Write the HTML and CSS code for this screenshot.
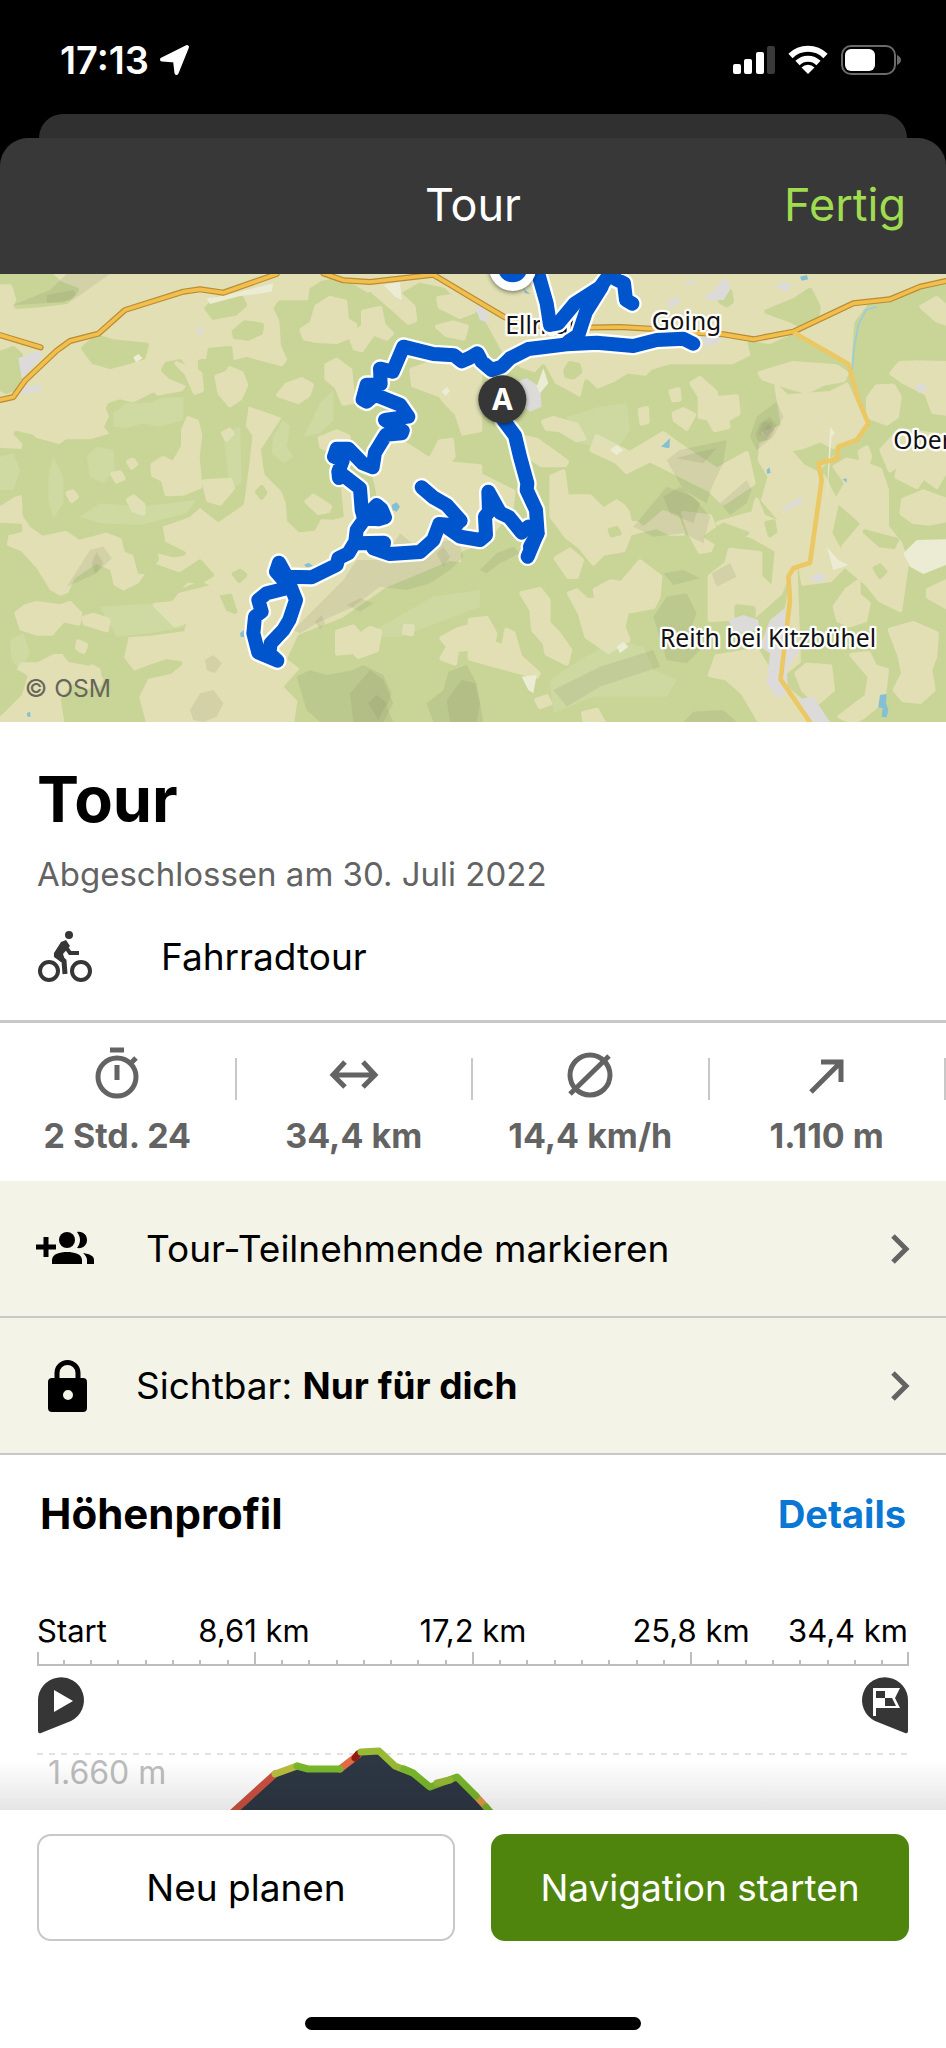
FILE: index.html
```html
<!DOCTYPE html>
<html lang="de">
<head>
    <meta charset="UTF-8">
    <meta name="viewport" content="width=device-width, initial-scale=1.0">
    <title>Tour</title>
    <link rel="stylesheet" href="styles.css">
</head>
<body>
    <div class="status-bar">
        <div class="status-left">
            <span>17:13</span>
            <svg width="32" height="32" viewBox="0 0 32 32"><path d="M28 3L3 15.500 16 16.500 17.500 29Z" fill="#fff" stroke="#fff" stroke-width="4" stroke-linejoin="round"/></svg>
        </div>
        <div class="status-right">
            <svg width="42" height="30" viewBox="0 0 42 30">
                <rect x="0" y="19" width="8" height="10" rx="2" fill="#fff"/>
                <rect x="11" y="14" width="8" height="15" rx="2" fill="#fff"/>
                <rect x="23" y="7" width="8" height="22" rx="2" fill="#fff"/>
                <rect x="34" y="1" width="8" height="28" rx="2" fill="#3a3a3a"/>
            </svg>
            <svg width="40" height="30" viewBox="0 0 40 30">
                <g fill="none" stroke="#fff" stroke-width="6">
                    <path d="M2.500 11A25 25 0 0 1 37.500 11"/>
                    <path d="M9.500 18A15 15 0 0 1 30.500 18"/>
                </g>
                <path d="M20 29L13.500 22.500A9 9 0 0 1 26.500 22.500Z" fill="#fff"/>
            </svg>
            <svg width="60" height="30" viewBox="0 0 60 30">
                <rect x="1" y="1" width="53" height="28" rx="9" fill="none" stroke="#6a6a6a" stroke-width="2"/>
                <rect x="4" y="4" width="30" height="22" rx="6" fill="#fff"/>
                <path d="M56 10Q60 12 60 15T56 20Z" fill="#6a6a6a"/>
            </svg>
        </div>
    </div>

    <div class="back-sheet"></div>
    <header class="nav-bar">
        <h2>Tour</h2>
        <button class="done">Fertig</button>
    </header>

    <main>
        <svg class="map" viewBox="0 12 2838 1344" role="img" aria-label="Karte der Tour">
            <rect y="12" width="2838" height="1344" fill="#e1dfb3"/>

            <!-- forest -->
            <g class="forest">
                <path d="M0 12H150L180 40 230 60 200 95 120 105 50 110 30 80 0 60Z"/>
                <path d="M250 235L290 200 340 215 440 225 430 262 385 275 330 290 280 275Z"/>
                <path d="M620 115L650 85 720 78 735 105 705 130 640 142Z"/>
                <path d="M702 185L735 158 785 165 782 188 745 205 705 200Z"/>
                <path d="M0 250L40 235 62 255 60 350 20 365 0 355Z"/>
                <path d="M330 405L360 395 400 405 460 375 470 385 550 370 570 345 535 330 510 320 490 300 500 282 540 275 560 300 585 355 605 360 600 275 625 270 630 240 690 235 695 280 740 268 850 298 870 270 850 225 845 150 828 115 840 98 930 98 935 60 965 40 1010 30 1060 50 1100 75 1150 65 1190 85 1260 45 1330 60 1370 100 1440 140 1500 250 1560 300 1620 320 1660 385 1700 560 1690 660 1600 680 1440 600 1330 570 1220 540 1160 640 1080 720 1000 742 960 740 940 775 900 780 868 750 865 700 850 660 800 610 790 540 855 440 740 400 730 470 750 500 740 590 725 700 655 748 600 705 565 735 480 765 490 820 550 850 520 855 465 840 470 868 440 905 420 905 405 850 380 840 370 800 320 780 240 802 200 775 130 790 95 765 75 735 72 665 40 675 0 700 0 540 70 545 75 520 48 490 95 500 105 510 180 530 200 515 270 515 340 495 320 470 335 440 325 415Z"/>
                <path d="M0 765L60 768 60 780 20 790 12 830 60 850 105 900 145 965 180 985 210 975 230 930 290 890 325 905 335 950 370 970 420 945 445 910 470 890 510 905 540 915 600 875 635 915 600 935 560 930 520 975 600 940 640 960 620 1040 570 1050 560 1075 450 1090 380 1095 365 1165 400 1210 440 1195 500 1175 540 1180 510 1205 440 1220 410 1280 430 1356 200 1356 190 1290 220 1250 250 1265 300 1260 320 1225 270 1180 210 1170 190 1145 160 1145 110 1170 60 1170 40 1200 75 1220 60 1270 0 1330Z"/>
                <path d="M648 985L690 978 705 1025 680 1015 650 1000Z"/>
                <path d="M702 912L720 903 735 915 718 932Z"/>
                <path d="M772 665L785 652 795 668 785 682Z"/>
                <path d="M900 1100L1030 1050 1160 960 1350 880 1500 900 1600 830 1560 700 1700 640 1760 850 1700 1000 1500 1356 890 1356 900 1290 860 1250 910 1195 870 1165Z"/>
                <path d="M1560 600L1640 620 1690 740 1720 1356H1400L1350 1100 1500 960 1540 800Z"/>
            </g>
            <g class="forest" transform="translate(1410 0)">
                <path d="M220 290L250 345 335 392 350 335 380 365 440 340 475 318 530 325 550 305 600 290 790 290 850 260 840 220 900 230 980 195 1130 290 1160 400 1195 460 1160 520 1100 540 1040 590 1050 660 1020 870 960 900 940 1000 900 1160 930 1240 1000 1356H-20V850L60 820 150 700 170 500 100 420Z"/>
                <path d="M975 90L1020 60 1045 110 1040 150 1000 170 960 150 890 125Z"/>
                <path d="M750 70L780 65 785 95 770 105 752 95Z"/>
                <path d="M287 300L300 280 325 285 330 305 310 322 290 318Z"/>
                <path d="M1160 160L1200 105 1330 60 1428 45V1356H1080L1060 1330 940 1230 1000 1180 990 900 1050 700 1060 600 1200 460 1150 300Z"/>
            </g>

            <!-- clearings -->
            <g class="field">
                <path d="M0 50L30 50 42 90 30 108 0 110Z"/>
                <path d="M905 180L935 160 950 110 990 85 1035 95 1040 150 1065 165 1060 195 1010 215 950 212 915 205Z"/>
                <path d="M1090 125L1140 115 1150 165 1175 190 1160 205 1120 190 1085 240 1065 235 1050 195 1090 170Z"/>
                <path d="M1120 65L1180 55 1240 110 1245 150 1225 158 1190 125Z"/>
                <path d="M1312 170L1360 158 1400 170 1390 205 1370 200 1340 195Z"/>
                <path d="M1315 85L1350 80 1420 125 1380 140 1320 110Z"/>
                <path d="M1235 300L1320 270 1440 290 1440 480 1390 490 1370 430 1340 400 1320 375 1240 345Z"/>
                <path d="M1120 600L1180 500 1290 570 1320 515 1355 510 1360 560 1340 580 1440 590 1440 700 1330 690 1290 660 1240 690 1200 740 1140 690Z"/>
                <path d="M650 320L680 310 690 295 725 310 738 345 720 385 690 405 660 370Z"/>
                <path d="M835 375L860 345 905 328 935 345 925 375 895 395Z"/>
                <path d="M980 285L1010 270 1050 300 1055 350 1060 395 1030 400 1010 350 980 325Z"/>
                <path d="M565 445L590 455 600 495 592 560 600 650 550 670 500 672 490 630 460 615 458 585 490 565 520 580 550 530 550 480Z"/>
                <path d="M612 635L690 630 698 655 660 700 625 690Z"/>
                <path d="M530 280L600 310 605 360 585 368 560 310Z"/>
                <path d="M960 505L1010 485 1045 500 1045 530 990 540 965 530Z"/>
                <path d="M1030 650L1080 640 1090 780 1040 760Z"/>
                <path d="M920 695L940 678 990 710 985 722 955 728Z"/>
                <path d="M385 690L400 680 430 705 430 730 400 720Z"/>
                <path d="M203 670L218 665 230 680 215 692Z"/>
                <path d="M385 575L398 570 408 582 395 592ZM338 612L360 608 370 625 350 633ZM670 490L688 480 697 490 680 508Z"/>
                <path d="M50 1030L75 1010 110 1000 180 1010 210 1000 240 1030 235 1060 190 1050 155 1090 110 1090 65 1075Z"/>
                <path d="M250 1045L280 1035 325 1050 320 1080 255 1060Z"/>
                <path d="M465 1005L520 1000 540 975 640 950 700 1090 560 1080 570 1050 525 1065Z"/>
                <path d="M235 1115L258 1125 250 1145 232 1135ZM275 1190L295 1200 300 1240 280 1235Z"/>
                <path d="M1012 1085L1060 1070 1080 1095 1110 1075 1140 1085 1130 1140 1075 1160 1060 1145 1012 1150Z"/>
                <path d="M1215 1068L1238 1070 1235 1092 1213 1088Z"/>
                <path d="M1325 1105L1370 1080 1440 1060 1440 1130 1370 1140 1365 1180 1325 1165 1345 1130Z"/>
            </g>
            <g class="field" transform="translate(1410 0)">
                <path d="M665 340L690 325 735 365 740 385 800 380 805 430 770 450 775 470 735 480 715 445 690 440 690 380Z"/>
                <path d="M510 420L530 415 532 455 515 460ZM602 365L625 358 628 388 610 390ZM612 430L640 418 672 435 650 475 615 450Z"/>
                <path d="M220 455L250 445 320 465 342 505 320 510 270 480 230 475Z"/>
                <path d="M155 500L200 510 290 575 285 585 215 585 170 555Z"/>
                <path d="M365 540L380 500 430 525 480 550 580 490 620 520 740 600 830 550 850 640 760 700 720 660 600 600 540 570 470 605 440 575Z"/>
                <path d="M245 620L280 605 290 680 360 680 400 720 440 695 470 715 480 760 530 760 570 725 620 740 640 790 600 790 560 770 480 790 460 840 400 850 370 880 330 830 290 800 245 740Z"/>
                <path d="M640 730L720 740 740 790 720 840 690 845 660 790ZM745 760L850 730 860 690 880 740 930 760 920 840 850 800 760 770Z"/>
                <path d="M870 310L970 280 1100 290 1130 310 1120 330 1060 340 1010 365 955 350 910 335 880 325Z"/>
                <path d="M920 350L950 380 1080 370 1130 345 1150 390 1185 450 1150 510 1090 530 1050 510 1000 530 950 540 880 490 940 470Z"/>
                <path d="M875 520L930 510 1000 590 1040 610 1045 660 1010 870 960 900 930 970 850 1040 720 1050 720 920 770 880 780 840 870 850 870 920 910 960 920 850 940 760 880 690 900 620 870 570Z"/>
                <path d="M258 865L300 840 335 870 320 920 295 920Z"/>
                <path d="M155 970L210 958 235 990 235 1060 265 1090 300 1140 290 1180 230 1150 225 1120 190 1080 185 1020Z"/>
                <path d="M298 970L320 962 350 990 380 990 375 960 420 935 455 940 510 875 570 920 565 980 550 1010 470 1025 460 1070 475 1110 415 1145 350 1100 330 1030Z"/>
                <path d="M0 1050L50 1045 75 1090 70 1120 100 1130 110 1080 130 1090 150 1160 205 1210 200 1220 90 1190 0 1165Z"/>
                <path d="M720 1215L740 1160 860 1140 920 1240 1010 1356 870 1356 820 1270 770 1225Z"/>
                <path d="M980 1210L1010 1185 1080 1190 1088 1260 1040 1300 1000 1260Z"/>
                <path d="M1195 385L1220 350 1270 348 1288 380 1280 440 1250 460 1195 440Z"/>
                <path d="M1265 310L1290 280 1340 278 1428 280V430L1390 425 1370 370 1300 335Z"/>
                <path d="M1355 110L1400 85 1428 110V160L1400 150Z"/>
                <path d="M1235 540L1290 480 1428 500V600L1400 650 1360 620 1340 650 1280 620 1290 580 1260 600Z"/>
                <path d="M1095 590L1130 570 1180 580 1230 600 1250 660 1250 770 1290 820 1310 880 1290 1020 1230 990 1190 940 1130 890 1120 830 1180 760 1100 690 1130 640Z"/>
                <path d="M1300 690L1360 665 1428 690V750L1380 760 1330 755 1295 730Z"/>
                <path d="M1170 545L1190 533 1200 560 1190 585 1175 575Z"/>
                <path d="M1095 1010L1130 960 1165 935 1165 975 1195 1000 1185 1050 1140 1065 1105 1050Z"/>
                <path d="M1060 620L1100 700 1080 790 1130 880 1080 930 1000 940 990 880 1020 860Z"/>
                <path d="M1260 1080L1330 1060 1400 1090 1395 1160 1380 1200 1390 1260 1350 1295 1300 1290 1275 1260 1300 1210 1290 1160Z"/>
                <path d="M1145 1155L1195 1150 1215 1190 1250 1200 1240 1290 1180 1340 1150 1356 1110 1340 1190 1280 1200 1220Z"/>
                <path d="M1375 960L1428 935V1010L1375 980Z"/>
                <path d="M200 1290L230 1280 240 1300 210 1310ZM340 1330L380 1320 400 1356H345Z"/>
            </g>
            <g class="forest" transform="translate(1410 0)">
                <path d="M710 800L760 765 830 790 760 830ZM420 780L440 775 448 790 425 795ZM890 760L910 755 915 785 900 795ZM1215 895L1230 888 1245 905 1230 920Z"/>
                <path d="M1185 785L1280 810 1270 830 1230 825ZM800 1010L850 1015 850 1040 800 1040Z"/>
                <path d="M440 640L560 630 590 700 520 760 470 700Z"/>
            </g>

            <!-- terrain shading -->
            <g class="pale">
                <path d="M340 430L380 400 450 400 480 385 550 380 550 450 480 470 430 460 380 475 340 470Z"/>
                <path d="M260 560L290 530 340 540 345 600 310 640 270 620Z"/>
                <path d="M145 620L160 560 190 620 190 700 160 745 145 690Z"/>
                <path d="M0 560L40 550 60 600 40 660 0 660Z"/>
                <path d="M670 490L720 470 725 640 690 660Z"/>
                <path d="M240 740L300 700 420 710 590 690 560 730 420 765 300 760Z"/>
                <path d="M820 500L850 450 870 470 860 530 880 560 850 580 815 550Z"/>
                <path d="M910 500L960 400 1000 360 1000 450 960 490Z"/>
                <path d="M300 1010L470 1000 560 1070 450 1090 350 1100Z"/>
                <path d="M1090 1100L1300 980 1440 960 1440 1010 1200 1100Z"/>
                <path d="M1700 440L1800 410 1880 400 1890 480 1850 540 1740 520Z"/>
                <path d="M1650 1230L1740 1170 1850 1110 1930 1130 1960 1200 2030 1230 2000 1280 1780 1280 1660 1330Z"/>
                <path d="M30 1110L70 1090 90 1150 60 1200 35 1170Z"/>
            </g>
            <g class="shade">
                <path d="M40 105L150 60 200 12H330L220 90 140 100Z"/>
                <path d="M140 75L220 60 230 75 190 98 140 98Z"/>
                <path d="M200 950L270 840 310 830 335 865 290 910Z"/>
                <path d="M275 880L290 845 310 880 285 912Z"/>
                <path d="M570 1320L600 1270 640 1260 670 1300 650 1340 610 1356 580 1350Z"/>
                <path d="M615 1170L640 1155 665 1180 645 1210 620 1200Z"/>
                <path d="M1030 930L1070 870 1150 870 1200 790 1260 840 1370 800 1390 860 1350 900 1290 940 1220 960 1140 950 1060 1010 950 1060 900 1090 880 1080Z"/>
                <path d="M1040 1005L1080 985 1120 1000 1080 1025ZM945 1055L965 1035 975 1060 960 1078Z"/>
                <path d="M1310 850L1330 830 1350 860 1330 890Z"/>
                <path d="M890 1220L930 1200 980 1215 1060 1200 1090 1185 1150 1215 1175 1270 1160 1310 1180 1356H960L920 1320Z"/>
                <path d="M1050 1270L1110 1200 1150 1230 1180 1300 1150 1356H1060Z"/>
                <path d="M1105 1300L1130 1275 1160 1300 1135 1350Z"/>
                <path d="M1280 1300L1330 1260 1345 1205 1400 1185 1430 1240 1450 1356H1300Z"/>
                <path d="M1340 1290L1385 1230 1425 1240 1440 1300 1430 1356H1350Z"/>
                <path d="M1440 900L1490 850 1540 830 1560 850 1500 880 1460 910Z"/>
                <path d="M2250 500L2270 440 2330 395 2350 440 2320 500 2270 540Z"/>
                <path d="M2265 495L2280 460 2310 440 2330 465 2310 505 2280 520Z"/>
                <path d="M2275 490L2290 455 2315 455 2322 478 2300 508Z"/>
                <path d="M2288 485L2305 462 2318 480 2300 500Z"/>
                <path d="M2000 570L2040 540 2180 510 2170 580 2140 640 2120 700 2050 660Z"/>
                <path d="M2030 565L2080 550 2150 535 2110 580Z"/>
                <path d="M1900 770L2000 650 2080 680 2130 740 2110 820 2050 790 1960 800Z"/>
                <path d="M1990 680L2040 650 2100 700 2080 760 2010 730Z"/>
                <path d="M2160 700L2240 630 2255 660 2240 700 2190 735Z"/>
                <path d="M1990 910L2050 900 2100 925 2020 945ZM2135 910L2190 880 2210 920 2150 950Z"/>
                <path d="M1960 1040L2000 980 2060 970 2090 1030 2070 1080 2100 1140 2060 1180 2000 1170Z"/>
                <path d="M1660 1260L1800 1190 1960 1140 1980 1190 1800 1250 1700 1310Z"/>
                <path d="M2050 1356L2080 1325 2170 1320 2210 1356Z"/>
            </g>

            <!-- settlements, rock and water -->
            <g class="town">
                <path d="M55 265L120 240 125 262 85 305 65 325ZM60 350L125 345 122 365 50 372Z"/>
                <path d="M585 180L600 172 613 184 600 195Z"/>
                <path d="M1425 110L1450 105 1470 160 1440 150Z"/>
                <path d="M1540 340L1580 325 1620 350 1625 410 1590 425 1560 400Z"/>
                <path d="M2115 75L2140 65 2165 30 2185 30 2190 60 2170 90 2120 90ZM2000 95L2035 80 2038 100 2010 115Z"/>
                <path d="M2325 50L2350 35 2375 45 2360 65ZM2055 38L2080 30 2085 42 2060 45Z"/>
                <path d="M2340 720L2400 680 2410 700 2380 710 2360 722ZM2745 348L2775 342 2780 360 2755 368Z"/>
                <path d="M2430 925L2460 905 2480 925 2450 940ZM1600 250L1660 240 1640 260 1610 265ZM2100 200L2165 200 2160 215 2120 230Z"/>
                <path d="M2185 1050L2230 1035 2275 1050 2275 1080 2205 1090ZM2310 1050L2355 1015 2360 1080 2400 1140 2360 1200 2365 1270 2330 1285 2300 1240 2310 1150 2280 1130Z"/>
                <path d="M2380 1290L2440 1280 2490 1356H2430Z"/>
            </g>
            <g class="rock">
                <path d="M620 85L680 75 820 40 815 65 750 75 720 78 630 102ZM1150 45L1200 35 1205 90 1185 80ZM400 262L415 252 428 265 408 277Z"/>
                <path d="M1325 365L1340 350 1350 362 1338 378ZM1610 350L1630 295 1645 340 1620 370ZM1830 540L1850 525 1870 540 1850 555Z"/>
                <path d="M2480 830L2515 870 2545 885 2500 900ZM1850 1130L1870 1115 1885 1130 1860 1150ZM1565 1220L1610 1215 1600 1270 1585 1260Z"/>
                <path d="M2710 850L2750 810 2838 808V885L2770 912 2730 890Z"/>
                <path d="M2480 695L2490 470 2505 490 2495 500Z"/>
            </g>
            <g class="water">
                <path d="M1175 705L1190 697 1200 710 1190 725 1178 720ZM912 885L925 878 940 888 920 892ZM720 1090L732 1080 735 1102 722 1100ZM80 1330L90 1325 92 1340 83 1340Z"/>
                <path d="M1983 530L2010 505 2008 535ZM2300 600L2308 592 2312 608 2302 612ZM2528 628L2540 625 2540 638ZM2400 20L2420 15 2425 28 2405 32Z"/>
                <path d="M2640 1275L2660 1272 2658 1300 2665 1320 2660 1342 2645 1340 2648 1315 2635 1312Z"/>
                <path d="M1568 45L1575 60 1592 72 1575 70Z"/>
            </g>
            <path class="river" d="M2630 110L2598 120 2588 140 2575 165 2562 235 2557 300"/>

            <!-- roads -->
            <g class="road-case">
                <g id="main-roads">
                    <path d="M0 390L40 381 75 332 170 242 210 213 295 191 375 120 550 65 600 58 670 68 830 12"/>
                    <path d="M-10 192L122 232"/>
                    <path d="M970 10L1030 31 1110 36 1300 14 1440 98 1515 142 1650 175 1860 171 1950 176 2110 190 2170 193 2260 208 2380 185 2560 100 2670 88 2760 50 2838 33"/>
                    <path d="M1290 5L1310 20"/>
                </g>
            </g>
            <path class="road-minor" d="M2385 190L2545 282 2575 390 2605 460 2570 510 2515 530 2510 568 2455 580 2465 630 2430 878 2380 895 2365 920 2370 990 2342 1228 2430 1356"/>
            <g class="road-fill"><use href="#main-roads"/></g>

            <g class="place">
                <text x="1516" y="192">Ellmau</text>
                <text x="1955" y="180">Going</text>
                <text x="2680" y="537">Ober</text>
                <text x="1980" y="1132">Reith bei Kitzbühel</text>
            </g>

            <!-- recorded track -->
            <g class="track-case"><use href="#track"/></g>
            <g class="track-line">
                <g id="track">
                    <path d="M2080 221L2050 206 1970 210 1900 228 1790 218 1700 223 1585 237 1530 265 1505 290 1475 300 1445 275 1432 250 1408 264 1385 274 1362 256 1300 252 1210 230 1178 305 1140 296 1142 342 1100 344 1088 388 1100 395 1125 374 1200 404 1225 440 1155 450 1208 482 1205 490 1158 494 1125 548 1118 592 1088 580 1045 536 1010 536 1002 560 1028 572 1015 605 1017 624 1022 610 1080 655 1085 720 1092 745 1130 705 1145 718 1155 742 1135 748 1095 745 1070 780 1066 815 1045 850 1015 865 1010 885 935 922 860 920 837 878 828 905 850 930 870 945 888 990 868 1050 850 1080 812 1120 808 1150 832 1172 775 1148 760 1090 765 1040 785 1025 775 990 800 970 860 955"/>
                    <path d="M1066 820L1152 818 1120 835 1170 852 1260 846 1300 810 1318 762 1350 765 1372 762"/>
                    <path d="M1265 652L1300 682 1340 705 1382 752 1345 775 1380 800 1440 810 1458 795 1455 740 1467 725 1465 665 1500 728 1528 742 1565 788 1585 770 1612 790 1583 860"/>
                    <path d="M1510 450L1545 497 1560 560 1582 640 1580 660 1608 720 1613 790 1590 830"/>
                    <path d="M1615 12L1640 100 1650 165 1675 160 1725 100 1800 52 1835 5 1848 28 1872 40 1878 90 1897 101"/>
                    <path d="M1805 50L1758 125 1735 195 1705 215"/>
                    <path d="M837 885L850 910M1130 712L1125 740M1098 355L1105 385"/>
                </g>
            </g>

            <circle class="marker" cx="1538" cy="-8" r="58" fill="#0055cc" stroke="#fff" stroke-width="26"/>
            <circle class="marker" cx="1507" cy="388" r="72" fill="#363636"/>
            <text class="marker-text" x="1507" y="421">A</text>
            <text class="copyright" x="74" y="1281">© OSM</text>
        </svg>

        <section class="summary">
            <h1>Tour</h1>
            <p class="date">Abgeschlossen am 30. Juli 2022</p>
            <div class="sport">
                <svg width="56" height="52" viewBox="0 0 56 52">
                    <g fill="none" stroke="#363636" stroke-width="4">
                        <circle cx="12" cy="41" r="9"/>
                        <circle cx="44" cy="41" r="9"/>
                        <path d="M27 14L20 25 27 31 28 44" stroke-width="5"/>
                        <path d="M26 13L33 23H42" stroke-width="4"/>
                    </g>
                    <path d="M24 12L29 10 33 16 26 24 28 30 24 32 17 27 17 23Z" fill="#363636"/>
                    <circle cx="32" cy="5" r="4" fill="#363636"/>
                </svg>
                <span>Fahrradtour</span>
            </div>
        </section>

        <section class="stats">
            <div class="stat">
                <svg width="56" height="56" viewBox="0 0 56 56" fill="none" stroke="#636363" stroke-width="5">
                    <circle cx="28" cy="33" r="19"/>
                    <path d="M21 6H35M28 21V36M42 19L47 14"/>
                </svg>
                <span>2 Std. 24</span>
            </div>
            <i class="line"></i>
            <div class="stat">
                <svg width="56" height="56" viewBox="0 0 56 56" fill="none" stroke="#636363" stroke-width="5">
                    <path d="M7 31H49M19 18L7 31 19 43M37 18L49 31 37 43"/>
                </svg>
                <span>34,4 km</span>
            </div>
            <i class="line"></i>
            <div class="stat">
                <svg width="56" height="56" viewBox="0 0 56 56" fill="none" stroke="#636363" stroke-width="5">
                    <circle cx="28" cy="31" r="20"/>
                    <path d="M8 50L47 12"/>
                </svg>
                <span>14,4 km/h</span>
            </div>
            <i class="line"></i>
            <div class="stat">
                <svg width="56" height="56" viewBox="0 0 56 56" fill="none" stroke="#636363" stroke-width="5">
                    <path d="M12 48L42 18M22 18H42V38"/>
                </svg>
                <span>1.110 m</span>
            </div>
            <i class="line"></i>
        </section>

        <a class="row" href="#">
            <svg class="row-icon wide" width="60" height="44" viewBox="0 0 60 44">
                <path d="M0 20H20M10 10V30" stroke="#000" stroke-width="5"/>
                <circle cx="31" cy="13" r="8"/>
                <path d="M16 37V33C16 27 24 25 31 25S46 27 46 33V37Z"/>
                <path d="M41 5C47 4 51 8 51 13S47 22 41 21C45 16 45 10 41 5Z"/>
                <path d="M47 26C54 27 58 29 58 33V37H51V33C51 30 49 28 47 26Z"/>
            </svg>
            <span>Tour-Teilnehmende markieren</span>
            <svg class="chevron" width="20" height="32" viewBox="0 0 20 32"><path d="M3 3L16 16 3 29" fill="none" stroke="#636363" stroke-width="5"/></svg>
        </a>
        <a class="row" href="#">
            <svg class="row-icon" width="62" height="52" viewBox="0 0 62 52">
                <path d="M21 19V13A10 10 0 0 1 42 13V19" fill="none" stroke="#000" stroke-width="5"/>
                <path fill-rule="evenodd" d="M16 18H47Q51 18 51 22V48Q51 52 47 52H16Q12 52 12 48V22Q12 18 16 18ZM32 30A5 5 0 1 0 32 40 5 5 0 1 0 32 30Z"/>
            </svg>
            <span>Sichtbar: <strong>Nur für dich</strong></span>
            <svg class="chevron" width="20" height="32" viewBox="0 0 20 32"><path d="M3 3L16 16 3 29" fill="none" stroke="#636363" stroke-width="5"/></svg>
        </a>

        <section class="profile">
            <div class="profile-head">
                <h3>Höhenprofil</h3>
                <a href="#">Details</a>
            </div>
            <svg class="chart" viewBox="0 0 946 210">
                <g class="km">
                    <text x="37" y="42">Start</text>
                    <text x="254" y="42" text-anchor="middle">8,61 km</text>
                    <text x="473" y="42" text-anchor="middle">17,2 km</text>
                    <text x="691" y="42" text-anchor="middle">25,8 km</text>
                    <text x="908" y="42" text-anchor="end">34,4 km</text>
                </g>
                <g fill="none" stroke="#bdbdbd" stroke-width="2">
                    <path d="M37 65H909"/>
                    <path d="M38 52V65M255 52V65M473 52V65M691 52V65M908 52V65"/>
                    <path d="M64 60V64M91 60V64M118 60V64M146 60V64M173 60V64M200 60V64M228 60V64M282 60V64M309 60V64M337 60V64M364 60V64M391 60V64M418 60V64M446 60V64M500 60V64M527 60V64M555 60V64M582 60V64M609 60V64M637 60V64M664 60V64M718 60V64M746 60V64M773 60V64M800 60V64M828 60V64M855 60V64M882 60V64"/>
                </g>
                <path d="M38 131V101A23 23 0 1 1 71 121L41 133Q38 134 38 131Z" fill="#363636"/>
                <path d="M54 90L73 101 54 112Z" fill="#fff"/>
                <path d="M908 131V101A23 23 0 1 0 875 121L905 133Q908 134 908 131Z" fill="#363636"/>
                <path d="M873 88H900L895 98 900 108H876V116H873Z" fill="#fff"/>
                <path d="M876 91H885V98H876ZM885 98H892L896 106H885Z" fill="#363636"/>
                <path d="M37 154H909" stroke="#c4c4c4" stroke-width="1" stroke-dasharray="6 6"/>
                <text class="level" x="48" y="184">1.660 m</text>

                <path d="M233 212L275 173 297 166 308 169 340 169 362 152 380 151 395 166 413 173 430 187 457 177 476 196 490 212Z" fill="#2d3743"/>
                <g class="slope">
                    <path d="M232 213L275 174" stroke="#cb5140"/>
                    <path d="M340 169L358 155" stroke="#e26b45"/>
                    <path d="M476 196L486 207" stroke="#e09a4a"/>
                    <path d="M486 207L492 214" stroke="#79b32a"/>
                    <path d="M275 174L297 166" stroke="#b9bd3c"/>
                    <path d="M297 166L308 169 340 169" stroke="#79b72b"/>
                    <path d="M355 158L358 154" stroke="#8f1b12"/>
                    <path d="M361 152L379 151 395 166 413 173" stroke="#97b934"/>
                    <path d="M404 169L413 173 430 187 457 177 476 196" stroke="#79b72b"/>
                    <path d="M437 183L450 180" stroke="#97b934"/>
                </g>
            </svg>
            <div class="fade"></div>
        </section>
    </main>

    <footer class="bottom-bar">
        <div class="actions">
            <button class="btn">Neu planen</button>
            <button class="btn primary">Navigation starten</button>
        </div>
        <div class="home-indicator"></div>
    </footer>
</body>
</html>
```
FILE: styles.css
```css
* {
    margin: 0;
    padding: 0;
    box-sizing: border-box;
}

body {
    font-family: Inter, "Liberation Sans", sans-serif;
    background-color: #000;
    color: #000;
    font-size: 37px;
    min-height: 100vh;
    display: flex;
    flex-direction: column;
}

svg {
    display: block;
}

a {
    color: inherit;
    text-decoration: none;
}

button {
    font: inherit;
    cursor: pointer;
}

/* Status bar */
.status-bar {
    height: 114px;
    padding: 6px 45px 0 60px;
    display: flex;
    align-items: center;
    justify-content: space-between;
    color: #fff;
    font-size: 38px;
    font-weight: 600;
}

.status-left {
    display: flex;
    align-items: center;
    gap: 10px;
}

.status-right {
    display: flex;
    align-items: center;
    gap: 13px;
}

/* Sheet header */
.back-sheet {
    height: 24px;
    margin: 0 39px;
    background-color: #303030;
    border-radius: 24px 24px 0 0;
}

.nav-bar {
    height: 136px;
    padding: 0 40px 4px;
    background-color: #383838;
    border-radius: 28px 28px 0 0;
    display: grid;
    grid-template-columns: 1fr auto 1fr;
    align-items: center;
    color: #fff;
    font-size: 45px;
}

.nav-bar h2 {
    grid-column: 2;
    font-size: inherit;
    font-weight: 400;
}

.done {
    justify-self: end;
    background: none;
    border: none;
    color: #a0dc50;
}

main {
    background-color: #fff;
}

/* Map */
.map {
    width: 100%;
    height: auto;
}

.forest,
.field {
    stroke-width: 14;
    stroke-linejoin: round;
}

.forest {
    fill: #c8d597;
    stroke: #c8d597;
}

.field {
    fill: #e1dfb3;
    stroke: #e1dfb3;
}

.pale {
    fill: #dfe5bd;
    opacity: 0.3;
}

.shade {
    fill: #6e7250;
    fill-opacity: 0.12;
}

.town {
    fill: #dddbd9;
}

.rock {
    fill: #ebecd3;
}

.water {
    fill: #84bfd4;
}

.river {
    fill: none;
    stroke: #9fcbd8;
    stroke-width: 5;
}

.road-case,
.road-fill,
.road-minor {
    fill: none;
    stroke-linejoin: round;
    stroke-linecap: round;
}

.road-case {
    stroke: #b98b35;
    stroke-width: 18;
}

.road-fill {
    stroke: #f2bf4c;
    stroke-width: 11;
}

.road-minor {
    stroke: #ecc865;
    stroke-width: 14;
}

.place text {
    font-family: "Noto Sans", sans-serif;
    font-size: 74px;
    fill: #111;
    stroke: #fff;
    stroke-width: 14;
    stroke-linejoin: round;
    paint-order: stroke;
}

.track-case,
.track-line {
    fill: none;
    stroke-linejoin: round;
    stroke-linecap: round;
}

.track-case {
    stroke: #fff;
    stroke-width: 56;
}

.track-line {
    stroke: #0055cc;
    stroke-width: 42;
}

.marker {
    filter: drop-shadow(0 4px 6px rgba(0, 0, 0, 0.5));
}

.marker-text {
    font-family: "Noto Sans", sans-serif;
    font-size: 90px;
    font-weight: 700;
    text-anchor: middle;
    fill: #fff;
}

.copyright {
    font-size: 74px;
    fill: #66665a;
}

/* Title block */
.summary {
    padding: 38px 37px;
    border-bottom: 3px solid #c8c8c8;
}

.summary h1 {
    font-size: 63px;
    line-height: 78px;
    font-weight: 700;
}

.date {
    margin-top: 16px;
    font-size: 33px;
    line-height: 40px;
    color: #636363;
}

.sport {
    margin-top: 36px;
    display: flex;
    align-items: center;
    gap: 68px;
}

/* Key figures */
.stats {
    height: 158px;
    padding-top: 21px;
    display: flex;
    align-items: flex-start;
}

.stat {
    flex: 1;
    display: flex;
    flex-direction: column;
    align-items: center;
    gap: 16px;
    color: #636363;
    font-size: 34px;
    line-height: 40px;
    font-weight: 700;
}

.line {
    width: 2px;
    height: 42px;
    margin-top: 14px;
    background-color: #c8c8c8;
}

/* Link rows */
.row {
    height: 137px;
    padding: 0 36px;
    display: flex;
    align-items: center;
    background-color: #f3f3e7;
    border-bottom: 2px solid #c8c8c8;
}

.row-icon {
    margin-right: 38px;
}

.row-icon.wide {
    margin-right: 50px;
}

.chevron {
    margin-left: auto;
}

/* Elevation profile */
.profile {
    position: relative;
}

.profile-head {
    height: 145px;
    padding: 33px 40px 0;
    display: flex;
    align-items: flex-start;
    justify-content: space-between;
    line-height: 52px;
}

.profile-head h3 {
    font-size: 42px;
    font-weight: 700;
}

.profile-head a {
    color: #0a77d5;
    font-size: 38px;
    font-weight: 700;
}

.chart {
    width: 100%;
    height: auto;
}

.km text {
    font-size: 31px;
}

.level {
    font-size: 32px;
    fill: #bdbdbd;
}

.slope {
    fill: none;
    stroke-width: 7;
    stroke-linejoin: round;
    stroke-linecap: round;
}

.fade {
    position: absolute;
    left: 0;
    right: 0;
    bottom: 0;
    height: 50px;
    background: linear-gradient(rgba(0, 0, 0, 0), rgba(0, 0, 0, 0.1));
}

/* Bottom bar */
.bottom-bar {
    flex: 1;
    padding: 24px 37px 18px;
    background-color: #fff;
    display: flex;
    flex-direction: column;
    justify-content: space-between;
    align-items: center;
}

.actions {
    width: 100%;
    display: grid;
    grid-template-columns: 1fr 1fr;
    gap: 36px;
}

.btn {
    height: 107px;
    border: 2px solid #c8c8c8;
    border-radius: 14px;
    background-color: #fff;
    color: #000;
}

.btn.primary {
    border: none;
    background-color: #4f850d;
    color: #fff;
}

.home-indicator {
    width: 336px;
    height: 13px;
    border-radius: 7px;
    background-color: #000;
}
```
